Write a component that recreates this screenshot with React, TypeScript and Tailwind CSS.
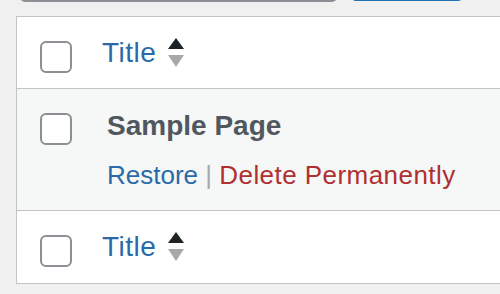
const FONT = { fontFamily: '"Liberation Sans", Arial, sans-serif' }

function Checkbox() {
  return <div className="w-[32px] h-[32px] rounded-[6px] border-2 border-[#8c8f94] bg-white" />
}

function SortArrows() {
  return (
    <svg width="16" height="29" viewBox="0 0 16 29" className="shrink-0">
      <polygon points="8,0 16,11 0,11" fill="#1d2327" />
      <polygon points="0,17 16,17 8,29" fill="#a7aaad" />
    </svg>
  )
}

function TitleRow({ border }: { border: string }) {
  return (
    <div className={`flex h-[72px] bg-white ${border}`}>
      <div className="pl-[23px] pt-[24px]">
        <Checkbox />
      </div>
      <div className="flex items-start ml-[30px] pt-[21px]">
        <span className="mt-[1px] text-[28px] leading-[28px] tracking-[0.5px] text-[#2a6aa9]">Title</span>
        <span className="ml-[12px]">
          <SortArrows />
        </span>
      </div>
    </div>
  )
}

export default function App() {
  return (
    <div className="w-[500px] h-[294px] bg-[#f0f0f1] overflow-hidden" style={FONT}>
      {/* toolbar bottoms peeking in from above */}
      <div className="flex mt-[-30px] h-[32px]">
        <div className="ml-[20px] w-[317px] h-[32px] rounded-[5px] border-2 border-[#8c8f94] bg-white" />
        <div className="ml-[15px] w-[110px] h-[31px] rounded-[4px] bg-[#2271b1]" />
      </div>

      <div className="mt-[14px] ml-[16px] w-[484px] border-l border-t border-b border-[#c3c4c7]">
        <TitleRow border="border-b border-[#c3c4c7]" />

        <div className="flex h-[122px] bg-[#f6f7f7] border-b border-[#c3c4c7]">
          <div className="pl-[23px] pt-[24px]">
            <Checkbox />
          </div>
          <div className="ml-[35px] pt-[23px]">
            <div className="text-[28px] leading-[28px] font-bold text-[#50575e]">Sample Page</div>
            <div className="mt-[22px] text-[26px] leading-[26px] whitespace-pre">
              <span className="text-[#2a6aa9]">Restore</span>
              <span className="text-[#a7aaad]"> | </span>
              <span className="text-[#b02f30] tracking-[0.45px]">Delete Permanently</span>
            </div>
          </div>
        </div>

        <TitleRow border="" />
      </div>
    </div>
  )
}
